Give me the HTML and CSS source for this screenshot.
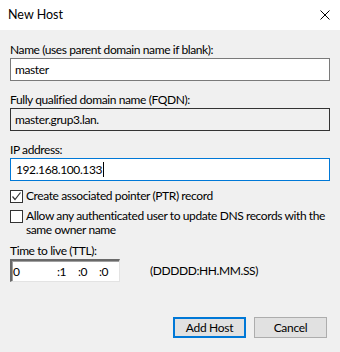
FILE: index.html
```html
<!DOCTYPE html>
<html>
<head>
<meta charset="utf-8">
<link rel="stylesheet" href="styles.css">
</head>
<body>
<div class="dialog">
  <div class="titlebar">
    <span class="title">New Host</span>
    <svg class="close" width="10" height="10" viewBox="0 0 10 10"><path d="M0.5 0.5 L9.5 9.5 M9.5 0.5 L0.5 9.5" stroke="#000" stroke-width="1" fill="none"/></svg>
  </div>
  <div class="content">
    <div class="label l-name">Name (uses parent domain name if blank):</div>
    <div class="textbox">master</div>
    <div class="label l-fqdn">Fully qualified domain name (FQDN):</div>
    <div class="textbox readonly">master.grup3.lan.</div>
    <div class="label l-ip">IP address:</div>
    <div class="textbox focused">192.168.100.133<span class="caret"></span></div>
    <div class="check c-ptr">
      <span class="box"><svg width="11" height="11" viewBox="0 0 11 11"><path d="M1.5 5.5 L4 8.5 L9.5 1.5" stroke="#333" stroke-width="1.2" fill="none"/></svg></span>
      <span class="ctext">Create associated pointer (PTR) record</span>
    </div>
    <div class="check c-allow">
      <span class="box"></span>
      <span class="ctext">Allow any authenticated user to update DNS records with the same owner name</span>
    </div>
    <div class="label l-ttl">Time to live (TTL):</div>
    <div class="ttl-row">
      <div class="ttl">
        <span class="t-d">0</span>
        <span class="t-h">:1</span>
        <span class="t-m">:0</span>
        <span class="t-s">:0</span>
      </div>
      <span class="ttl-fmt">(DDDDD:HH.MM.SS)</span>
    </div>
    <div class="buttons">
      <button class="btn default">Add Host</button>
      <button class="btn">Cancel</button>
    </div>
  </div>
</div>
</body>
</html>
```
FILE: styles.css
```css
html, body {
  margin: 0;
  padding: 0;
}
body {
  width: 340px;
  height: 352px;
  background: #f0f0f0;
  font-family: Lato, "Liberation Sans", sans-serif;
  font-size: 12px;
  letter-spacing: -0.4px;
  color: #000;
  overflow: hidden;
}
.dialog {
  width: 340px;
  height: 352px;
}
.titlebar {
  height: 30px;
  background: #fff;
  display: flex;
  align-items: center;
  justify-content: space-between;
  padding: 0 10px 0 8px;
  box-sizing: border-box;
}
.title {
  font-size: 12.5px;
  letter-spacing: 0;
  line-height: 15px;
  margin-top: -1px;
}
.close {
  display: block;
  margin-top: -1px;
}
.content {
  padding: 0 10px;
}
.label {
  height: 15px;
  line-height: 15px;
  white-space: nowrap;
}
.l-name { padding-top: 12px; margin-bottom: 1px; }
.l-fqdn { margin-top: 11px; margin-bottom: 1px; }
.l-ip { margin-top: 11px; margin-bottom: 1px; }
.textbox {
  box-sizing: border-box;
  height: 23px;
  border: 1px solid #7a7a7a;
  background: #fff;
  padding-left: 4px;
  line-height: 21px;
  display: flex;
  align-items: center;
}
.textbox.readonly {
  background: #f0f0f0;
  border-color: #333;
}
.textbox.focused {
  border-color: #0078d7;
  padding-left: 5px;
}
.caret {
  display: inline-block;
  width: 1px;
  height: 15px;
  background: #000;
  margin-left: 1px;
}
.check {
  display: flex;
  align-items: flex-start;
  line-height: 14px;
}
.c-ptr { margin-top: 9px; }
.c-allow { margin-top: 7px; }
.box {
  box-sizing: border-box;
  flex: none;
  width: 13px;
  height: 13px;
  border: 1px solid #333;
  background: #fff;
  margin-right: 3px;
  display: flex;
  align-items: center;
  justify-content: center;
}
.box svg { display: block; }
.ctext {
  margin-top: -1px;
}
.l-ttl { margin-top: 6px; margin-bottom: 1px; }
.ttl-row {
  display: flex;
  align-items: center;
}
.ttl {
  box-sizing: border-box;
  width: 110px;
  height: 23px;
  background: #fff;
  border-top: 2px solid #696969;
  border-left: 2px solid #696969;
  border-right: 1px solid #e3e3e3;
  border-bottom: 1px solid #e3e3e3;
  box-shadow: inset 1px 1px 0 #a0a0a0;
  display: flex;
  align-items: center;
  line-height: 15px;
  padding-left: 1px;
}
.t-d { width: 44px; }
.t-h { width: 21px; }
.t-m { width: 21px; }
.ttl-fmt { margin-left: 30px; }
.buttons {
  display: flex;
  justify-content: flex-end;
  gap: 8px;
  margin-top: 35px;
  padding-right: 3px;
}
.btn {
  box-sizing: border-box;
  width: 73px;
  height: 21px;
  background: #e1e1e1;
  border: 1px solid #adadad;
  font-family: inherit;
  font-size: 12px;
  letter-spacing: -0.3px;
  padding: 0;
  margin: 0;
  color: #000;
  line-height: 17px;
}
.btn.default {
  border: 2px solid #0078d7;
}
```
